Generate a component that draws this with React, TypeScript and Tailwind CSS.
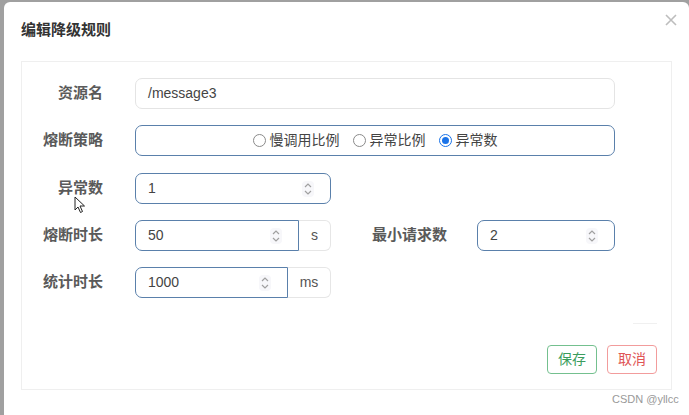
import { FC, ReactNode } from "react";

const font = { fontFamily: '"Liberation Sans", "Noto Sans CJK SC", sans-serif' };

const Spinner: FC = () => (
	<div className="flex h-[16px] w-[12px] items-center justify-center rounded-sm bg-[#f7f7fa]">
		<svg width="8" height="14" viewBox="0 0 8 14" fill="none" stroke="#a0a0a0" strokeWidth="1.2">
			<path d="M1 5 L4 2 L7 5" />
			<path d="M1 9 L4 12 L7 9" />
		</svg>
	</div>
);

const Label: FC<{ children: ReactNode; className?: string }> = ({ children, className }) => (
	<div className={`shrink-0 text-right text-[15px] font-bold text-[#5a5a5a] ${className ?? ""}`}>{children}</div>
);

const NumberBox: FC<{ value: string; width: string; addon?: boolean }> = ({ value, width, addon }) => (
	<div
		className={`flex h-full ${width} items-center justify-between border border-[#5a80ab] pl-[12px] pr-[16px] text-[14px] text-[#444] ${
			addon ? "rounded-l-[7px]" : "rounded-[7px]"
		}`}
	>
		<span>{value}</span>
		<Spinner />
	</div>
);

const Addon: FC<{ children: ReactNode; width: string }> = ({ children, width }) => (
	<div
		className={`flex h-full ${width} items-center justify-center rounded-r-[6px] border border-l-0 border-[#e6e6e6] text-[14px] text-[#555]`}
	>
		{children}
	</div>
);

const Radio: FC<{ label: string; checked?: boolean }> = ({ label, checked }) => (
	<div className="flex items-center gap-[4px]">
		{checked ? (
			<span className="flex h-[13px] w-[13px] items-center justify-center rounded-full border border-[#1a73e8]">
				<span className="h-[7px] w-[7px] rounded-full bg-[#1a73e8]" />
			</span>
		) : (
			<span className="h-[13px] w-[13px] rounded-full border border-[#8a8a8a]" />
		)}
		<span className="text-[14px] text-[#444]">{label}</span>
	</div>
);

export default function App() {
	return (
		<div className="relative h-[415px] w-[689px] overflow-hidden bg-[#a0a0a0]" style={font}>
			<div className="ml-[4px] mt-[2px] h-[440px] rounded-t-[6px] bg-white">
				{/* header */}
				<div className="flex h-[59px] items-start justify-between pl-[17px] pr-[12px]">
					<h1 className="mt-[18px] text-[15px] font-bold leading-[20px] text-[#333]">编辑降级规则</h1>
					<svg className="mt-[12px]" width="12" height="12" viewBox="0 0 12 12" stroke="#bdbdbd" strokeWidth="1.6">
						<path d="M1 1 L11 11 M11 1 L1 11" />
					</svg>
				</div>

				{/* form panel */}
				<div className="mx-[17px] h-[329px] border border-[#efefef] pt-[16px]">
					<div className="flex flex-col">
						<div className="flex h-[31px] items-center gap-[32px]">
							<Label className="w-[81px]">资源名</Label>
							<div className="flex h-full w-[480px] items-center rounded-[7px] border border-[#e4e4e4] pl-[12px] text-[14px] text-[#444]">
								/message3
							</div>
						</div>

						<div className="mt-[16px] flex h-[31px] items-center gap-[32px]">
							<Label className="w-[81px]">熔断策略</Label>
							<div className="flex h-full w-[480px] items-center justify-center gap-[13px] rounded-[7px] border border-[#5a80ab]">
								<Radio label="慢调用比例" />
								<Radio label="异常比例" />
								<Radio label="异常数" checked />
							</div>
						</div>

						<div className="mt-[17px] flex h-[31px] items-center gap-[32px]">
							<Label className="w-[81px]">异常数</Label>
							<NumberBox value="1" width="w-[196px]" />
						</div>

						<div className="mt-[16px] flex h-[31px] items-center">
							<Label className="w-[81px]">熔断时长</Label>
							<div className="ml-[32px] flex h-full">
								<NumberBox value="50" width="w-[164px]" addon />
								<Addon width="w-[32px]">s</Addon>
							</div>
							<Label className="ml-[40px] w-[76px]">最小请求数</Label>
							<div className="ml-[30px] h-full">
								<NumberBox value="2" width="w-[138px]" />
							</div>
						</div>

						<div className="mt-[16px] flex h-[31px] items-center gap-[32px]">
							<Label className="w-[81px]">统计时长</Label>
							<div className="flex h-full">
								<NumberBox value="1000" width="w-[153px]" addon />
								<Addon width="w-[43px]">ms</Addon>
							</div>
						</div>
					</div>

					{/* footer */}
					<div className="mr-[14px] mt-[25px] flex justify-end">
						<div className="h-px w-[24px] bg-[#f0f0f0]" />
					</div>
					<div className="mr-[14px] mt-[21px] flex justify-end gap-[10px]">
						<button className="h-[29px] w-[50px] rounded-[4px] border border-[#74c08f] text-[14px] text-[#3b9d5d]">
							保存
						</button>
						<button className="h-[29px] w-[50px] rounded-[4px] border border-[#f29c9c] text-[14px] text-[#e05555]">
							取消
						</button>
					</div>
				</div>
			</div>

			{/* mouse pointer */}
			<svg className="absolute left-[74px] top-[196px]" width="12" height="18" viewBox="0 0 12 18">
				<path d="M1 1 L1 14 L4 11 L6.5 16.5 L8.5 15.5 L6 10 L10.5 10 Z" fill="white" stroke="#222" strokeWidth="1" />
			</svg>

			{/* watermark */}
			<div className="absolute left-[612px] top-[391px] text-[11px] text-[#999]">CSDN @yllcc</div>
		</div>
	);
}
